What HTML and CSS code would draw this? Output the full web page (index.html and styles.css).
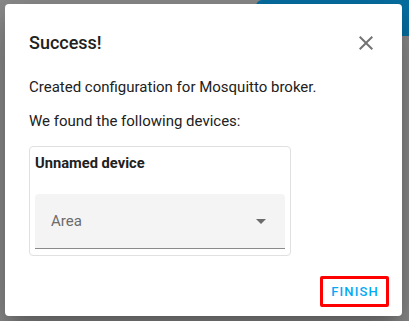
FILE: index.html
```html
<!DOCTYPE html>
<html>
<head>
<meta charset="utf-8">
<link rel="stylesheet" href="styles.css">
</head>
<body>
<div class="backdrop">
  <div class="appbar"></div>
</div>
<div class="dialog">
  <div class="header">
    <h2 class="title">Success!</h2>
    <svg class="close" viewBox="0 0 24 24" width="24" height="24"><path d="M19 6.41L17.59 5 12 10.59 6.41 5 5 6.41 10.59 12 5 17.59 6.41 19 12 13.41 17.59 19 19 17.59 13.41 12z"/></svg>
  </div>
  <p class="text first">Created configuration for Mosquitto broker.</p>
  <p class="text">We found the following devices:</p>
  <div class="card">
    <div class="device-name">Unnamed device</div>
    <div class="select">
      <span class="select-label">Area</span>
      <span class="arrow"></span>
    </div>
  </div>
  <div class="actions">
    <button class="finish">FINISH</button>
  </div>
</div>
</body>
</html>
```
FILE: styles.css
```css
html, body {
  margin: 0;
  padding: 0;
}
body {
  width: 409px;
  height: 321px;
  overflow: hidden;
  background: #8b8b8b;
  font-family: Roboto, "Liberation Sans", sans-serif;
  position: relative;
}
.backdrop {
  position: absolute;
  inset: 0;
}
.appbar {
  position: absolute;
  left: 256px;
  top: 0;
  width: 160px;
  height: 36px;
  background: #0770a3;
  border-radius: 6px 0 0 0;
}
.dialog {
  position: absolute;
  left: 5px;
  top: 4px;
  width: 397px;
  height: 312px;
  box-sizing: border-box;
  background: #fff;
  border-radius: 4px;
  padding: 0 24px;
  box-shadow: 0 11px 15px -7px rgba(0,0,0,.2), 0 24px 38px 3px rgba(0,0,0,.14), 0 9px 46px 8px rgba(0,0,0,.12);
}
.header {
  display: flex;
  align-items: center;
  justify-content: space-between;
  height: 24px;
  margin-top: 27px;
}
.title {
  margin: 0;
  font-size: 18px;
  font-weight: 500;
  color: #212121;
  line-height: 24px;
}
.close {
  fill: #737373;
}
.text {
  margin: 0;
  font-size: 15px;
  line-height: 24px;
  color: #212121;
}
.text.first {
  margin-top: 20px;
  margin-bottom: 10px;
}
.card {
  margin-top: 13px;
  width: 262px;
  box-sizing: border-box;
  border: 1px solid #e0e0e0;
  border-radius: 4px;
  padding: 5px 5px 6px 5px;
}
.device-name {
  font-size: 14.7px;
  font-weight: 700;
  color: #212121;
  line-height: 22px;
}
.select {
  margin-top: 20px;
  height: 55px;
  box-sizing: border-box;
  background: #f4f4f4;
  border-radius: 4px 4px 0 0;
  border-bottom: 1px solid #8a8a8a;
  display: flex;
  align-items: center;
  justify-content: space-between;
  padding: 0 19px 0 16px;
}
.select-label {
  font-size: 15px;
  color: #6b6b6b;
}
.arrow {
  width: 0;
  height: 0;
  border-left: 5px solid transparent;
  border-right: 5px solid transparent;
  border-top: 5px solid #6b6b6b;
}
.actions {
  display: flex;
  justify-content: flex-end;
  margin-top: 20px;
  margin-right: -11px;
}
.finish {
  width: 69px;
  height: 31px;
  box-sizing: border-box;
  border: 3px solid #ff0000;
  border-radius: 2px;
  background: #fff;
  color: #03a9f4;
  font-family: Roboto, "Liberation Sans", sans-serif;
  font-size: 13px;
  font-weight: 500;
  letter-spacing: 1.1px;
  padding: 0 0 0 1px;
  text-align: center;
}
```
